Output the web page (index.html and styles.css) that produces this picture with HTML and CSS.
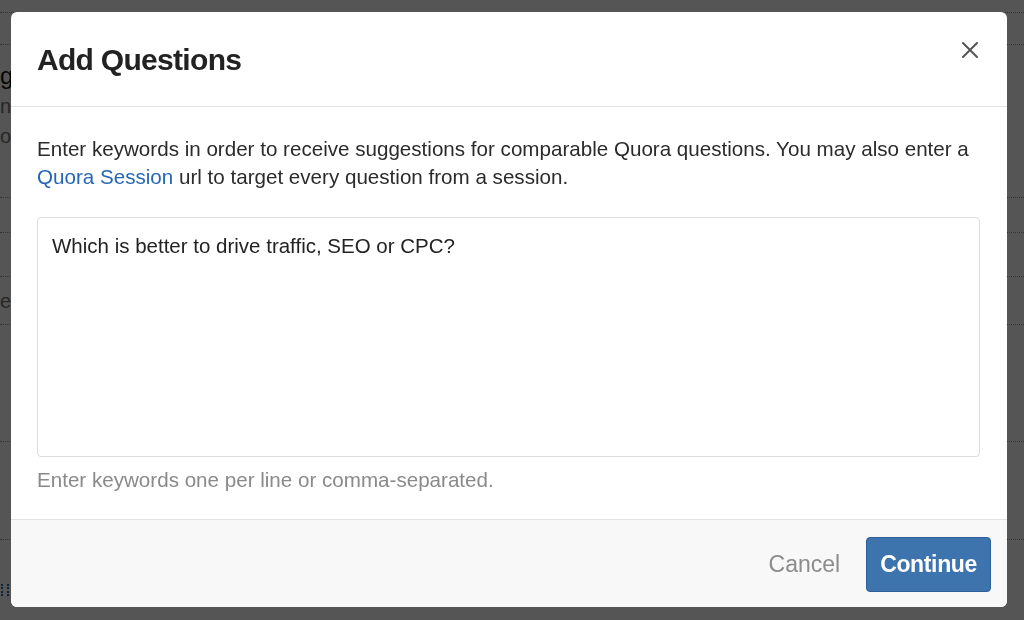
FILE: index.html
```html
<!DOCTYPE html>
<html lang="en">
<head>
<meta charset="utf-8">
<title>Add Questions</title>
<link rel="stylesheet" href="styles.css">
</head>
<body>
<div class="page">
  <div class="row r1"></div>
  <div class="row r2"></div>
  <div class="row r3">
    <div class="cell">
      <span class="bg-title">g</span>
      <span class="bg-sub">nc</span>
      <span class="bg-sub">o</span>
    </div>
  </div>
  <div class="row r4"></div>
  <div class="row r5"></div>
  <div class="row r6"><div class="cell"><span class="bg-sub">e</span></div></div>
  <div class="row r7"></div>
  <div class="row r8"></div>
  <div class="row r9"><div class="cell"><span class="bg-icon"></span></div></div>
</div>

<div class="overlay">
  <div class="modal" role="dialog" aria-labelledby="modal-title">
    <div class="modal-header">
      <h2 class="modal-title" id="modal-title">Add Questions</h2>
      <button class="close" type="button" aria-label="Close">
        <svg width="16" height="16" viewBox="0 0 16 16" aria-hidden="true">
          <path d="M1 1 L15 15 M15 1 L1 15" stroke="#555" stroke-width="2" stroke-linecap="round" fill="none"/>
        </svg>
      </button>
    </div>
    <div class="modal-body">
      <p class="intro">Enter keywords in order to receive suggestions for comparable Quora questions. You may also enter a <a href="#" class="link">Quora Session</a> url to target every question from a session.</p>
      <textarea class="keywords">Which is better to drive traffic, SEO or CPC?</textarea>
      <p class="help">Enter keywords one per line or comma-separated.</p>
    </div>
    <div class="modal-footer">
      <a href="#" class="cancel">Cancel</a>
      <button class="btn-primary" type="button">Continue</button>
    </div>
  </div>
</div>
</body>
</html>
```

FILE: styles.css
```css
* { box-sizing: border-box; }

html, body {
  margin: 0;
  padding: 0;
  width: 1024px;
  height: 620px;
  overflow: hidden;
}

body {
  font-family: "Liberation Sans", Arial, Helvetica, sans-serif;
  background: #ffffff;
  color: #2b2b2b;
}

/* background page (mostly hidden behind the dialog) */
.page {
  display: flex;
  flex-direction: column;
}

.row {
  border-bottom: 1px dotted #9a9a9a;
  display: flex;
}

.r1 { height: 13px; }
.r2 { height: 32px; }
.r3 { height: 153px; }
.r4 { height: 35px; }
.r5 { height: 44px; }
.r6 { height: 48px; }
.r7 { height: 117px; }
.r8 { height: 98px; }
.r9 { height: 80px; border-bottom: none; }

.cell {
  display: flex;
  flex-direction: column;
  align-items: flex-start;
}

.bg-title {
  white-space: nowrap;
  font-size: 24px;
  color: #111;
  margin-top: 16px;
  line-height: 30px;
}

.bg-sub {
  white-space: nowrap;
  font-size: 20px;
  color: #777;
  line-height: 30px;
}

.r6 .cell { justify-content: center; }

.bg-icon {
  display: block;
  width: 8px;
  height: 12px;
  margin-top: 44px;
  margin-left: 1px;
  border-left: 2px dotted #2a66b0;
  border-right: 2px dotted #2a66b0;
}

/* overlay + dialog */
.overlay {
  position: fixed;
  inset: 0;
  background: rgba(0, 0, 0, 0.665);
  display: flex;
  padding: 12px 17px 13px 11px;
}

.modal {
  flex: 1;
  display: flex;
  flex-direction: column;
  background: #ffffff;
  border-radius: 6px;
  overflow: hidden;
}

.modal-header {
  display: flex;
  justify-content: space-between;
  align-items: flex-start;
  padding: 30px 29px 28px 26px;
  border-bottom: 1px solid #e3e3e3;
}

.modal-title {
  margin: 0;
  font-size: 30px;
  line-height: 36px;
  font-weight: bold;
  letter-spacing: -0.7px;
  color: #222;
}

.close {
  width: 16px;
  height: 16px;
  margin: 0;
  padding: 0;
  border: 0;
  background: none;
  display: flex;
  cursor: pointer;
}

.modal-body {
  padding: 28px 26px 25px 26px;
  display: flex;
  flex-direction: column;
}

.intro {
  margin: 0;
  font-size: 20.6px;
  line-height: 28px;
  color: #2b2b2b;
}

.link {
  color: #2767b5;
  text-decoration: none;
}

.keywords {
  display: block;
  margin: 26px 0 0 0;
  width: 943px;
  height: 240px;
  padding: 14px 14px;
  border: 1px solid #dcdcdc;
  border-radius: 4px;
  font-family: inherit;
  font-size: 20.5px;
  line-height: 28px;
  color: #222;
  resize: none;
  outline: none;
}

.help {
  margin: 9px 0 0 0;
  font-size: 20.6px;
  line-height: 28px;
  color: #8a8a8a;
}

.modal-footer {
  flex: 1;
  display: flex;
  justify-content: flex-end;
  align-items: center;
  gap: 26px;
  padding: 2px 16px 0 26px;
  background: #f8f8f8;
  border-top: 1px solid #e3e3e3;
}

.cancel {
  font-size: 23px;
  color: #8c8c8c;
  text-decoration: none;
}

.btn-primary {
  height: 55px;
  padding: 0 13px;
  border: 1px solid #2d6099;
  border-radius: 4px;
  background: #3d74ad;
  color: #ffffff;
  font-family: inherit;
  font-size: 23px;
  font-weight: bold;
  letter-spacing: -0.35px;
  cursor: pointer;
}
```
